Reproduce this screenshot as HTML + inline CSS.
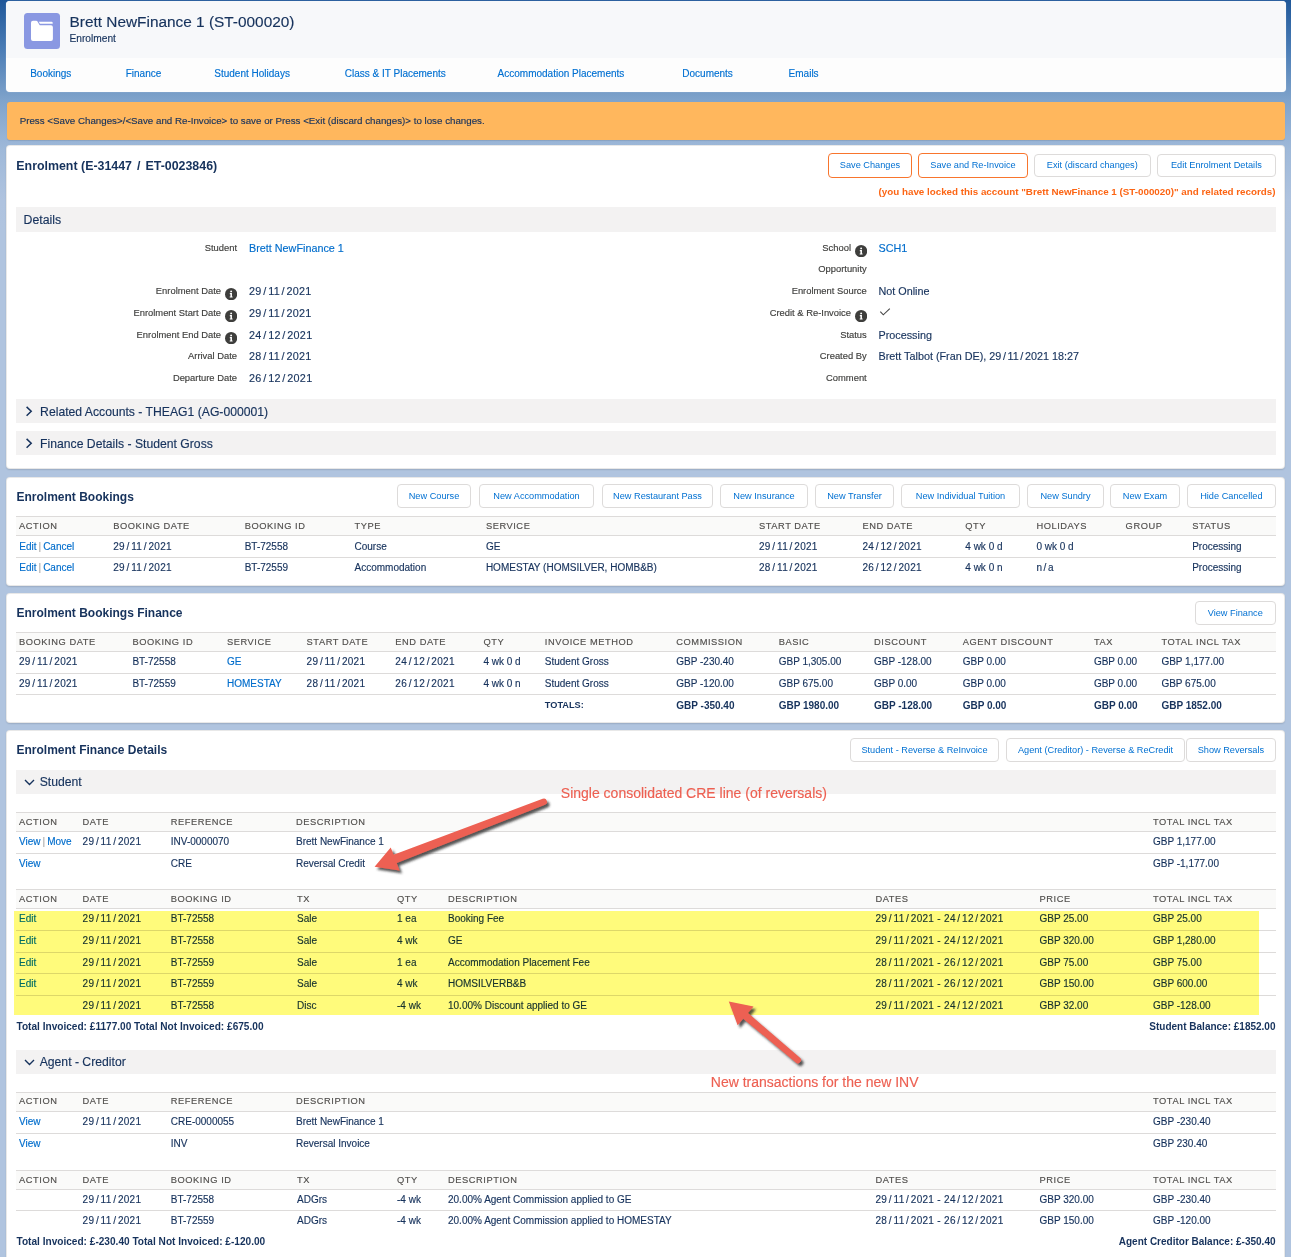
<!DOCTYPE html><html><head><meta charset="utf-8"><style>
html,body{margin:0;padding:0;}
body{width:1291px;height:1257px;position:relative;overflow:hidden;font-family:"Liberation Sans",sans-serif;background:#b0c4df;}
#bg{position:absolute;left:0;top:0;width:1291px;height:260px;background:linear-gradient(to bottom,#1f5799 0px,#4b7db6 50px,#7fa3cb 100px,#9fb9d9 150px,#afc3df 200px,#b0c4df 230px);}
.t{position:absolute;line-height:1;white-space:nowrap;-webkit-text-stroke:0.15px currentColor;}
.btn{position:absolute;box-sizing:border-box;background:#fff;border-radius:4px;color:#0070d2;text-align:center;white-space:nowrap;}
.info{position:absolute;line-height:0}
</style></head><body><div id="bg"></div>
<div style="position:absolute;left:6px;top:1px;width:1280px;height:90.5px;background:#fdfdfd;border-radius:4px;box-shadow:0 0 1px rgba(255,255,255,.6);overflow:hidden"></div>
<div style="position:absolute;left:6px;top:1px;width:1280px;height:57px;background:#f7f8fa;border-radius:4px 4px 0 0;"></div>
<div style="position:absolute;left:24px;top:13px;width:36px;height:36px;border-radius:3.5px;background:#8a98e2"><svg width="36" height="36" viewBox="0 0 36 36"><path d="M7 9.7 Q7 7.7 9 7.7 L12.3 7.7 Q13 7.7 13.35 8.3 L15.4 11.7 Q15.7 12.25 16.3 12.25 L27 12.25 Q28.9 12.25 28.9 14.2 L28.9 26 Q28.9 28 27 28 L9 28 Q7 28 7 26 Z" fill="#fff"/><path d="M14.7 8.75 L27.6 8.75 Q28.7 8.75 28.7 9.9 L28.7 10.85 L15.95 10.85 Z" fill="#fff"/></svg></div>
<div class="t" style="top:14.01px;font-size:15.4px;color:#16325c;left:69.5px;">Brett NewFinance 1 (ST-000020)</div>
<div class="t" style="top:34.42px;font-size:10.2px;color:#16325c;left:69.5px;">Enrolment</div>
<div class="t" style="top:68.58px;font-size:10px;color:#0070d2;left:30.2px;">Bookings</div>
<div class="t" style="top:68.58px;font-size:10px;color:#0070d2;left:125.7px;">Finance</div>
<div class="t" style="top:68.58px;font-size:10px;color:#0070d2;left:214.3px;">Student Holidays</div>
<div class="t" style="top:68.58px;font-size:10px;color:#0070d2;left:344.8px;">Class &amp; IT Placements</div>
<div class="t" style="top:68.58px;font-size:10px;color:#0070d2;left:497.6px;">Accommodation Placements</div>
<div class="t" style="top:68.58px;font-size:10px;color:#0070d2;left:682.3px;">Documents</div>
<div class="t" style="top:68.58px;font-size:10px;color:#0070d2;left:788.6px;">Emails</div>
<div style="position:absolute;left:7px;top:102px;width:1278px;height:38px;background:#ffb75d;border-radius:3px;box-shadow:0 1px 1px rgba(0,0,0,.1);"></div>
<div class="t" style="top:115.80px;font-size:9.75px;color:#16325c;left:19.7px;">Press &lt;Save Changes&gt;/&lt;Save and Re-Invoice&gt; to save or Press &lt;Exit (discard changes)&gt; to lose changes.</div>
<div style="position:absolute;left:6px;top:145px;width:1279px;height:324px;background:#fff;border-radius:4px;box-sizing:border-box;border:1px solid rgba(0,0,0,.09);box-shadow:0 1px 1.5px rgba(0,0,0,.12);"></div>
<div class="t" style="top:159.55px;font-size:12.4px;color:#16325c;font-weight:700;-webkit-text-stroke:0;left:16.3px;">Enrolment (E-31447 <span style="padding:0 1.6px">/</span> ET-0023846)</div>
<div class="btn" style="left:828px;top:152.5px;width:84px;height:25.5px;border:1.6px solid #f8752d;font-size:9.2px;line-height:22.3px">Save Changes</div>
<div class="btn" style="left:918px;top:152.5px;width:110px;height:25.5px;border:1.6px solid #f8752d;font-size:9.2px;line-height:22.3px">Save and Re-Invoice</div>
<div class="btn" style="left:1034px;top:153.5px;width:116.5px;height:23.0px;border:1px solid #dddbda;font-size:9.2px;line-height:21.0px">Exit (discard changes)</div>
<div class="btn" style="left:1157px;top:153.5px;width:118.70000000000005px;height:23.0px;border:1px solid #dddbda;font-size:9.2px;line-height:21.0px">Edit Enrolment Details</div>
<div class="t" style="top:186.75px;font-size:9.8px;color:#fc6514;font-weight:700;-webkit-text-stroke:0;right:15.5px;">(you have locked this account "Brett NewFinance 1 (ST-000020)" and related records)</div>
<div style="position:absolute;left:16px;top:207px;width:1260px;height:25px;background:#f3f2f2;"></div>
<div class="t" style="top:213.64px;font-size:12.3px;color:#16325c;left:23.5px;">Details</div>
<div class="t" style="top:243.09px;font-size:9.4px;color:#3e3e3c;right:1054px;">Student</div>
<div class="t" style="top:242.91px;font-size:10.8px;color:#006dcc;left:249px;">Brett NewFinance 1</div>
<div class="t" style="top:286.09px;font-size:9.4px;color:#3e3e3c;right:1070px;">Enrolment Date</div>
<div class="info" style="left:224.8px;top:288.0px;width:12.3px;height:12.3px;"><svg width="12.3" height="12.3" viewBox="0 0 12 12"><circle cx="6" cy="6" r="6" fill="#3e3e3c"/><circle cx="6" cy="3.3" r="0.95" fill="#fff"/><path d="M4.7 5 L6.8 5 L6.8 8.3 L7.4 8.3 L7.4 9.3 L4.6 9.3 L4.6 8.3 L5.3 8.3 L5.3 6 L4.7 6 Z" fill="#fff"/></svg></div>
<div class="t" style="top:285.91px;font-size:10.8px;color:#16325c;letter-spacing:0.3px;left:249px;">29<span style="padding:0 1.6px">/</span>11<span style="padding:0 1.6px">/</span>2021</div>
<div class="t" style="top:308.09px;font-size:9.4px;color:#3e3e3c;right:1070px;">Enrolment Start Date</div>
<div class="info" style="left:224.8px;top:310.0px;width:12.3px;height:12.3px;"><svg width="12.3" height="12.3" viewBox="0 0 12 12"><circle cx="6" cy="6" r="6" fill="#3e3e3c"/><circle cx="6" cy="3.3" r="0.95" fill="#fff"/><path d="M4.7 5 L6.8 5 L6.8 8.3 L7.4 8.3 L7.4 9.3 L4.6 9.3 L4.6 8.3 L5.3 8.3 L5.3 6 L4.7 6 Z" fill="#fff"/></svg></div>
<div class="t" style="top:307.91px;font-size:10.8px;color:#16325c;letter-spacing:0.3px;left:249px;">29<span style="padding:0 1.6px">/</span>11<span style="padding:0 1.6px">/</span>2021</div>
<div class="t" style="top:330.09px;font-size:9.4px;color:#3e3e3c;right:1070px;">Enrolment End Date</div>
<div class="info" style="left:224.8px;top:332.0px;width:12.3px;height:12.3px;"><svg width="12.3" height="12.3" viewBox="0 0 12 12"><circle cx="6" cy="6" r="6" fill="#3e3e3c"/><circle cx="6" cy="3.3" r="0.95" fill="#fff"/><path d="M4.7 5 L6.8 5 L6.8 8.3 L7.4 8.3 L7.4 9.3 L4.6 9.3 L4.6 8.3 L5.3 8.3 L5.3 6 L4.7 6 Z" fill="#fff"/></svg></div>
<div class="t" style="top:329.91px;font-size:10.8px;color:#16325c;letter-spacing:0.3px;left:249px;">24<span style="padding:0 1.6px">/</span>12<span style="padding:0 1.6px">/</span>2021</div>
<div class="t" style="top:351.09px;font-size:9.4px;color:#3e3e3c;right:1054px;">Arrival Date</div>
<div class="t" style="top:350.91px;font-size:10.8px;color:#16325c;letter-spacing:0.3px;left:249px;">28<span style="padding:0 1.6px">/</span>11<span style="padding:0 1.6px">/</span>2021</div>
<div class="t" style="top:373.09px;font-size:9.4px;color:#3e3e3c;right:1054px;">Departure Date</div>
<div class="t" style="top:372.91px;font-size:10.8px;color:#16325c;letter-spacing:0.3px;left:249px;">26<span style="padding:0 1.6px">/</span>12<span style="padding:0 1.6px">/</span>2021</div>
<div class="t" style="top:243.09px;font-size:9.4px;color:#3e3e3c;right:440px;">School</div>
<div class="info" style="left:854.5px;top:244.9px;width:12.3px;height:12.3px;"><svg width="12.3" height="12.3" viewBox="0 0 12 12"><circle cx="6" cy="6" r="6" fill="#3e3e3c"/><circle cx="6" cy="3.3" r="0.95" fill="#fff"/><path d="M4.7 5 L6.8 5 L6.8 8.3 L7.4 8.3 L7.4 9.3 L4.6 9.3 L4.6 8.3 L5.3 8.3 L5.3 6 L4.7 6 Z" fill="#fff"/></svg></div>
<div class="t" style="top:242.91px;font-size:10.8px;color:#006dcc;left:878.5px;">SCH1</div>
<div class="t" style="top:264.09px;font-size:9.4px;color:#3e3e3c;right:424.29999999999995px;">Opportunity</div>
<div class="t" style="top:286.09px;font-size:9.4px;color:#3e3e3c;right:424.29999999999995px;">Enrolment Source</div>
<div class="t" style="top:285.91px;font-size:10.8px;color:#16325c;left:878.5px;">Not Online</div>
<div class="t" style="top:308.09px;font-size:9.4px;color:#3e3e3c;right:440px;">Credit &amp; Re-Invoice</div>
<div class="info" style="left:854.5px;top:310.0px;width:12.3px;height:12.3px;"><svg width="12.3" height="12.3" viewBox="0 0 12 12"><circle cx="6" cy="6" r="6" fill="#3e3e3c"/><circle cx="6" cy="3.3" r="0.95" fill="#fff"/><path d="M4.7 5 L6.8 5 L6.8 8.3 L7.4 8.3 L7.4 9.3 L4.6 9.3 L4.6 8.3 L5.3 8.3 L5.3 6 L4.7 6 Z" fill="#fff"/></svg></div>
<svg style="position:absolute;left:878.5px;top:307.5px" width="12" height="9" viewBox="0 0 12 9"><path d="M1.3 3.6 L4.3 6.8 L10.8 0.6" fill="none" stroke="#4a4a4a" stroke-width="1.15"/></svg>
<div class="t" style="top:330.09px;font-size:9.4px;color:#3e3e3c;right:424.29999999999995px;">Status</div>
<div class="t" style="top:329.91px;font-size:10.8px;color:#16325c;left:878.5px;">Processing</div>
<div class="t" style="top:351.09px;font-size:9.4px;color:#3e3e3c;right:424.29999999999995px;">Created By</div>
<div class="t" style="top:350.91px;font-size:10.8px;color:#16325c;left:878.5px;">Brett Talbot (Fran DE), 29<span style="padding:0 1.6px">/</span>11<span style="padding:0 1.6px">/</span>2021 18:27</div>
<div class="t" style="top:373.09px;font-size:9.4px;color:#3e3e3c;right:424.29999999999995px;">Comment</div>
<div style="position:absolute;left:16px;top:399px;width:1260px;height:23.5px;background:#f3f2f2;"></div>
<svg style="position:absolute;left:25px;top:405.5px" width="8" height="11" viewBox="0 0 8 11"><path d="M1.6 0.9 L6.2 5.3 L1.6 9.7" fill="none" stroke="#16325c" stroke-width="1.5"/></svg>
<div class="t" style="top:405.72px;font-size:12.2px;color:#16325c;left:40.1px;">Related Accounts - THEAG1 (AG-000001)</div>
<div style="position:absolute;left:16px;top:431px;width:1260px;height:23.5px;background:#f3f2f2;"></div>
<svg style="position:absolute;left:25px;top:437.5px" width="8" height="11" viewBox="0 0 8 11"><path d="M1.6 0.9 L6.2 5.3 L1.6 9.7" fill="none" stroke="#16325c" stroke-width="1.5"/></svg>
<div class="t" style="top:437.72px;font-size:12.2px;color:#16325c;left:40.1px;">Finance Details - Student Gross</div>
<div style="position:absolute;left:6px;top:477px;width:1279px;height:108.5px;background:#fff;border-radius:4px;box-sizing:border-box;border:1px solid rgba(0,0,0,.09);box-shadow:0 1px 1.5px rgba(0,0,0,.12);"></div>
<div class="t" style="top:490.89px;font-size:12px;color:#16325c;font-weight:700;-webkit-text-stroke:0;left:16.5px;">Enrolment Bookings</div>
<div class="btn" style="left:397px;top:484px;width:74px;height:24px;border:1px solid #dddbda;font-size:9.2px;line-height:22px">New Course</div>
<div class="btn" style="left:479px;top:484px;width:115px;height:24px;border:1px solid #dddbda;font-size:9.2px;line-height:22px">New Accommodation</div>
<div class="btn" style="left:602px;top:484px;width:111px;height:24px;border:1px solid #dddbda;font-size:9.2px;line-height:22px">New Restaurant Pass</div>
<div class="btn" style="left:720px;top:484px;width:88px;height:24px;border:1px solid #dddbda;font-size:9.2px;line-height:22px">New Insurance</div>
<div class="btn" style="left:815px;top:484px;width:79px;height:24px;border:1px solid #dddbda;font-size:9.2px;line-height:22px">New Transfer</div>
<div class="btn" style="left:901px;top:484px;width:119px;height:24px;border:1px solid #dddbda;font-size:9.2px;line-height:22px">New Individual Tuition</div>
<div class="btn" style="left:1027px;top:484px;width:77px;height:24px;border:1px solid #dddbda;font-size:9.2px;line-height:22px">New Sundry</div>
<div class="btn" style="left:1110px;top:484px;width:70px;height:24px;border:1px solid #dddbda;font-size:9.2px;line-height:22px">New Exam</div>
<div class="btn" style="left:1187px;top:484px;width:88.70000000000005px;height:24px;border:1px solid #dddbda;font-size:9.2px;line-height:22px">Hide Cancelled</div>
<div style="position:absolute;left:16px;top:516px;width:1260px;height:19px;background:#fafaf9;"></div>
<div style="position:absolute;left:16px;top:516px;width:1260px;height:1px;background:#dddbda;"></div>
<div style="position:absolute;left:16px;top:535px;width:1260px;height:1px;background:#dddbda;"></div>
<div class="t" style="top:522.18px;font-size:9.3px;color:#514f4d;letter-spacing:0.55px;left:19.1px;">ACTION</div>
<div class="t" style="top:522.18px;font-size:9.3px;color:#514f4d;letter-spacing:0.55px;left:113.2px;">BOOKING DATE</div>
<div class="t" style="top:522.18px;font-size:9.3px;color:#514f4d;letter-spacing:0.55px;left:244.7px;">BOOKING ID</div>
<div class="t" style="top:522.18px;font-size:9.3px;color:#514f4d;letter-spacing:0.55px;left:354.5px;">TYPE</div>
<div class="t" style="top:522.18px;font-size:9.3px;color:#514f4d;letter-spacing:0.55px;left:485.9px;">SERVICE</div>
<div class="t" style="top:522.18px;font-size:9.3px;color:#514f4d;letter-spacing:0.55px;left:759px;">START DATE</div>
<div class="t" style="top:522.18px;font-size:9.3px;color:#514f4d;letter-spacing:0.55px;left:862.4px;">END DATE</div>
<div class="t" style="top:522.18px;font-size:9.3px;color:#514f4d;letter-spacing:0.55px;left:965.3px;">QTY</div>
<div class="t" style="top:522.18px;font-size:9.3px;color:#514f4d;letter-spacing:0.55px;left:1036.4px;">HOLIDAYS</div>
<div class="t" style="top:522.18px;font-size:9.3px;color:#514f4d;letter-spacing:0.55px;left:1125.6px;">GROUP</div>
<div class="t" style="top:522.18px;font-size:9.3px;color:#514f4d;letter-spacing:0.55px;left:1192.2px;">STATUS</div>
<div class="t" style="top:541.58px;font-size:10px;color:#006dcc;left:19.3px;">Edit<span style="color:#aaa;padding:0 2px">|</span>Cancel</div>
<div class="t" style="top:541.58px;font-size:10px;color:#16325c;letter-spacing:0.3px;left:113.2px;">29<span style="padding:0 1.6px">/</span>11<span style="padding:0 1.6px">/</span>2021</div>
<div class="t" style="top:541.58px;font-size:10px;color:#16325c;left:244.7px;">BT-72558</div>
<div class="t" style="top:541.58px;font-size:10px;color:#16325c;left:354.5px;">Course</div>
<div class="t" style="top:541.58px;font-size:10px;color:#16325c;left:485.9px;">GE</div>
<div class="t" style="top:541.58px;font-size:10px;color:#16325c;letter-spacing:0.3px;left:759px;">29<span style="padding:0 1.6px">/</span>11<span style="padding:0 1.6px">/</span>2021</div>
<div class="t" style="top:541.58px;font-size:10px;color:#16325c;letter-spacing:0.3px;left:862.4px;">24<span style="padding:0 1.6px">/</span>12<span style="padding:0 1.6px">/</span>2021</div>
<div class="t" style="top:541.58px;font-size:10px;color:#16325c;left:965.3px;">4 wk 0 d</div>
<div class="t" style="top:541.58px;font-size:10px;color:#16325c;left:1036.4px;">0 wk 0 d</div>
<div class="t" style="top:541.58px;font-size:10px;color:#16325c;left:1192.2px;">Processing</div>
<div style="position:absolute;left:16px;top:557px;width:1260px;height:1px;background:#dddbda;"></div>
<div class="t" style="top:562.58px;font-size:10px;color:#006dcc;left:19.3px;">Edit<span style="color:#aaa;padding:0 2px">|</span>Cancel</div>
<div class="t" style="top:562.58px;font-size:10px;color:#16325c;letter-spacing:0.3px;left:113.2px;">29<span style="padding:0 1.6px">/</span>11<span style="padding:0 1.6px">/</span>2021</div>
<div class="t" style="top:562.58px;font-size:10px;color:#16325c;left:244.7px;">BT-72559</div>
<div class="t" style="top:562.58px;font-size:10px;color:#16325c;left:354.5px;">Accommodation</div>
<div class="t" style="top:562.58px;font-size:10px;color:#16325c;left:485.9px;">HOMESTAY (HOMSILVER, HOMB&amp;B)</div>
<div class="t" style="top:562.58px;font-size:10px;color:#16325c;letter-spacing:0.3px;left:759px;">28<span style="padding:0 1.6px">/</span>11<span style="padding:0 1.6px">/</span>2021</div>
<div class="t" style="top:562.58px;font-size:10px;color:#16325c;letter-spacing:0.3px;left:862.4px;">26<span style="padding:0 1.6px">/</span>12<span style="padding:0 1.6px">/</span>2021</div>
<div class="t" style="top:562.58px;font-size:10px;color:#16325c;left:965.3px;">4 wk 0 n</div>
<div class="t" style="top:562.58px;font-size:10px;color:#16325c;left:1036.4px;">n<span style="padding:0 1.6px">/</span>a</div>
<div class="t" style="top:562.58px;font-size:10px;color:#16325c;left:1192.2px;">Processing</div>
<div style="position:absolute;left:6px;top:592.5px;width:1279px;height:130.5px;background:#fff;border-radius:4px;box-sizing:border-box;border:1px solid rgba(0,0,0,.09);box-shadow:0 1px 1.5px rgba(0,0,0,.12);"></div>
<div class="t" style="top:606.89px;font-size:12px;color:#16325c;font-weight:700;-webkit-text-stroke:0;left:16.5px;">Enrolment Bookings Finance</div>
<div class="btn" style="left:1195px;top:600.5px;width:80.5px;height:24.0px;border:1px solid #dddbda;font-size:9.2px;line-height:22.0px">View Finance</div>
<div style="position:absolute;left:16px;top:632px;width:1260px;height:19px;background:#fafaf9;"></div>
<div style="position:absolute;left:16px;top:632px;width:1260px;height:1px;background:#dddbda;"></div>
<div style="position:absolute;left:16px;top:651px;width:1260px;height:1px;background:#dddbda;"></div>
<div class="t" style="top:638.18px;font-size:9.3px;color:#514f4d;letter-spacing:0.55px;left:19px;">BOOKING DATE</div>
<div class="t" style="top:638.18px;font-size:9.3px;color:#514f4d;letter-spacing:0.55px;left:132.4px;">BOOKING ID</div>
<div class="t" style="top:638.18px;font-size:9.3px;color:#514f4d;letter-spacing:0.55px;left:227px;">SERVICE</div>
<div class="t" style="top:638.18px;font-size:9.3px;color:#514f4d;letter-spacing:0.55px;left:306.6px;">START DATE</div>
<div class="t" style="top:638.18px;font-size:9.3px;color:#514f4d;letter-spacing:0.55px;left:395.3px;">END DATE</div>
<div class="t" style="top:638.18px;font-size:9.3px;color:#514f4d;letter-spacing:0.55px;left:483.4px;">QTY</div>
<div class="t" style="top:638.18px;font-size:9.3px;color:#514f4d;letter-spacing:0.55px;left:544.8px;">INVOICE METHOD</div>
<div class="t" style="top:638.18px;font-size:9.3px;color:#514f4d;letter-spacing:0.55px;left:676.3px;">COMMISSION</div>
<div class="t" style="top:638.18px;font-size:9.3px;color:#514f4d;letter-spacing:0.55px;left:778.7px;">BASIC</div>
<div class="t" style="top:638.18px;font-size:9.3px;color:#514f4d;letter-spacing:0.55px;left:874px;">DISCOUNT</div>
<div class="t" style="top:638.18px;font-size:9.3px;color:#514f4d;letter-spacing:0.55px;left:962.7px;">AGENT DISCOUNT</div>
<div class="t" style="top:638.18px;font-size:9.3px;color:#514f4d;letter-spacing:0.55px;left:1093.9px;">TAX</div>
<div class="t" style="top:638.18px;font-size:9.3px;color:#514f4d;letter-spacing:0.55px;left:1161.4px;">TOTAL INCL TAX</div>
<div class="t" style="top:656.58px;font-size:10px;color:#16325c;letter-spacing:0.3px;left:19px;">29<span style="padding:0 1.6px">/</span>11<span style="padding:0 1.6px">/</span>2021</div>
<div class="t" style="top:656.58px;font-size:10px;color:#16325c;left:132.4px;">BT-72558</div>
<div class="t" style="top:656.58px;font-size:10px;color:#006dcc;left:227px;">GE</div>
<div class="t" style="top:656.58px;font-size:10px;color:#16325c;letter-spacing:0.3px;left:306.6px;">29<span style="padding:0 1.6px">/</span>11<span style="padding:0 1.6px">/</span>2021</div>
<div class="t" style="top:656.58px;font-size:10px;color:#16325c;letter-spacing:0.3px;left:395.3px;">24<span style="padding:0 1.6px">/</span>12<span style="padding:0 1.6px">/</span>2021</div>
<div class="t" style="top:656.58px;font-size:10px;color:#16325c;left:483.4px;">4 wk 0 d</div>
<div class="t" style="top:656.58px;font-size:10px;color:#16325c;left:544.8px;">Student Gross</div>
<div class="t" style="top:656.58px;font-size:10px;color:#16325c;left:676.3px;">GBP -230.40</div>
<div class="t" style="top:656.58px;font-size:10px;color:#16325c;left:778.7px;">GBP 1,305.00</div>
<div class="t" style="top:656.58px;font-size:10px;color:#16325c;left:874px;">GBP -128.00</div>
<div class="t" style="top:656.58px;font-size:10px;color:#16325c;left:962.7px;">GBP 0.00</div>
<div class="t" style="top:656.58px;font-size:10px;color:#16325c;left:1093.9px;">GBP 0.00</div>
<div class="t" style="top:656.58px;font-size:10px;color:#16325c;left:1161.4px;">GBP 1,177.00</div>
<div style="position:absolute;left:16px;top:673px;width:1260px;height:1px;background:#dddbda;"></div>
<div class="t" style="top:678.58px;font-size:10px;color:#16325c;letter-spacing:0.3px;left:19px;">29<span style="padding:0 1.6px">/</span>11<span style="padding:0 1.6px">/</span>2021</div>
<div class="t" style="top:678.58px;font-size:10px;color:#16325c;left:132.4px;">BT-72559</div>
<div class="t" style="top:678.58px;font-size:10px;color:#006dcc;left:227px;">HOMESTAY</div>
<div class="t" style="top:678.58px;font-size:10px;color:#16325c;letter-spacing:0.3px;left:306.6px;">28<span style="padding:0 1.6px">/</span>11<span style="padding:0 1.6px">/</span>2021</div>
<div class="t" style="top:678.58px;font-size:10px;color:#16325c;letter-spacing:0.3px;left:395.3px;">26<span style="padding:0 1.6px">/</span>12<span style="padding:0 1.6px">/</span>2021</div>
<div class="t" style="top:678.58px;font-size:10px;color:#16325c;left:483.4px;">4 wk 0 n</div>
<div class="t" style="top:678.58px;font-size:10px;color:#16325c;left:544.8px;">Student Gross</div>
<div class="t" style="top:678.58px;font-size:10px;color:#16325c;left:676.3px;">GBP -120.00</div>
<div class="t" style="top:678.58px;font-size:10px;color:#16325c;left:778.7px;">GBP 675.00</div>
<div class="t" style="top:678.58px;font-size:10px;color:#16325c;left:874px;">GBP 0.00</div>
<div class="t" style="top:678.58px;font-size:10px;color:#16325c;left:962.7px;">GBP 0.00</div>
<div class="t" style="top:678.58px;font-size:10px;color:#16325c;left:1093.9px;">GBP 0.00</div>
<div class="t" style="top:678.58px;font-size:10px;color:#16325c;left:1161.4px;">GBP 675.00</div>
<div style="position:absolute;left:16px;top:694px;width:1260px;height:1px;background:#dddbda;"></div>
<div class="t" style="top:701.26px;font-size:9.2px;color:#16325c;font-weight:700;-webkit-text-stroke:0;left:544.8px;">TOTALS:</div>
<div class="t" style="top:700.58px;font-size:10px;color:#16325c;font-weight:700;-webkit-text-stroke:0;left:676.3px;">GBP -350.40</div>
<div class="t" style="top:700.58px;font-size:10px;color:#16325c;font-weight:700;-webkit-text-stroke:0;left:778.7px;">GBP 1980.00</div>
<div class="t" style="top:700.58px;font-size:10px;color:#16325c;font-weight:700;-webkit-text-stroke:0;left:874px;">GBP -128.00</div>
<div class="t" style="top:700.58px;font-size:10px;color:#16325c;font-weight:700;-webkit-text-stroke:0;left:962.7px;">GBP 0.00</div>
<div class="t" style="top:700.58px;font-size:10px;color:#16325c;font-weight:700;-webkit-text-stroke:0;left:1093.9px;">GBP 0.00</div>
<div class="t" style="top:700.58px;font-size:10px;color:#16325c;font-weight:700;-webkit-text-stroke:0;left:1161.4px;">GBP 1852.00</div>
<div style="position:absolute;left:6px;top:729.5px;width:1279px;height:540px;box-sizing:border-box;background:#fff;border-radius:4px;border:1px solid rgba(0,0,0,.09);box-shadow:0 1px 1.5px rgba(0,0,0,.12)"></div>
<div class="t" style="top:743.89px;font-size:12px;color:#16325c;font-weight:700;-webkit-text-stroke:0;left:16.5px;">Enrolment Finance Details</div>
<div class="btn" style="left:850px;top:737.5px;width:149px;height:24.0px;border:1px solid #dddbda;font-size:9.2px;line-height:22.0px">Student - Reverse &amp; ReInvoice</div>
<div class="btn" style="left:1006px;top:737.5px;width:179px;height:24.0px;border:1px solid #dddbda;font-size:9.2px;line-height:22.0px">Agent (Creditor) - Reverse &amp; ReCredit</div>
<div class="btn" style="left:1186px;top:737.5px;width:89.70000000000005px;height:24.0px;border:1px solid #dddbda;font-size:9.2px;line-height:22.0px">Show Reversals</div>
<div style="position:absolute;left:16px;top:770px;width:1260px;height:24px;background:#f3f2f2;"></div>
<svg style="position:absolute;left:23.6px;top:779px" width="11" height="7" viewBox="0 0 11 7"><path d="M1 1 L5.5 5.5 L10 1" fill="none" stroke="#16325c" stroke-width="1.4"/></svg>
<div class="t" style="top:775.72px;font-size:12.2px;color:#16325c;left:39.7px;">Student</div>
<div style="position:absolute;left:16px;top:812px;width:1260px;height:19px;background:#fafaf9;"></div>
<div style="position:absolute;left:16px;top:812px;width:1260px;height:1px;background:#dddbda;"></div>
<div style="position:absolute;left:16px;top:831px;width:1260px;height:1px;background:#dddbda;"></div>
<div class="t" style="top:818.18px;font-size:9.3px;color:#514f4d;letter-spacing:0.55px;left:19.1px;">ACTION</div>
<div class="t" style="top:818.18px;font-size:9.3px;color:#514f4d;letter-spacing:0.55px;left:82.6px;">DATE</div>
<div class="t" style="top:818.18px;font-size:9.3px;color:#514f4d;letter-spacing:0.55px;left:170.8px;">REFERENCE</div>
<div class="t" style="top:818.18px;font-size:9.3px;color:#514f4d;letter-spacing:0.55px;left:296px;">DESCRIPTION</div>
<div class="t" style="top:818.18px;font-size:9.3px;color:#514f4d;letter-spacing:0.55px;left:1153px;">TOTAL INCL TAX</div>
<div class="t" style="top:836.58px;font-size:10px;color:#006dcc;left:19.1px;">View<span style="color:#aaa;padding:0 2px">|</span>Move</div>
<div class="t" style="top:836.58px;font-size:10px;color:#16325c;letter-spacing:0.3px;left:82.6px;">29<span style="padding:0 1.6px">/</span>11<span style="padding:0 1.6px">/</span>2021</div>
<div class="t" style="top:836.58px;font-size:10px;color:#16325c;left:170.8px;">INV-0000070</div>
<div class="t" style="top:836.58px;font-size:10px;color:#16325c;left:296px;">Brett NewFinance 1</div>
<div class="t" style="top:836.58px;font-size:10px;color:#16325c;left:1153px;">GBP 1,177.00</div>
<div style="position:absolute;left:16px;top:853px;width:1260px;height:1px;background:#dddbda;"></div>
<div class="t" style="top:858.58px;font-size:10px;color:#006dcc;left:19.1px;">View</div>
<div class="t" style="top:858.58px;font-size:10px;color:#16325c;left:170.8px;">CRE</div>
<div class="t" style="top:858.58px;font-size:10px;color:#16325c;left:296px;">Reversal Credit</div>
<div class="t" style="top:858.58px;font-size:10px;color:#16325c;left:1153px;">GBP -1,177.00</div>
<div style="position:absolute;left:16px;top:889px;width:1260px;height:19px;background:#fafaf9;"></div>
<div style="position:absolute;left:16px;top:889px;width:1260px;height:1px;background:#dddbda;"></div>
<div style="position:absolute;left:16px;top:908px;width:1260px;height:1px;background:#dddbda;"></div>
<div class="t" style="top:895.18px;font-size:9.3px;color:#514f4d;letter-spacing:0.55px;left:19.1px;">ACTION</div>
<div class="t" style="top:895.18px;font-size:9.3px;color:#514f4d;letter-spacing:0.55px;left:82.6px;">DATE</div>
<div class="t" style="top:895.18px;font-size:9.3px;color:#514f4d;letter-spacing:0.55px;left:170.8px;">BOOKING ID</div>
<div class="t" style="top:895.18px;font-size:9.3px;color:#514f4d;letter-spacing:0.55px;left:297px;">TX</div>
<div class="t" style="top:895.18px;font-size:9.3px;color:#514f4d;letter-spacing:0.55px;left:397px;">QTY</div>
<div class="t" style="top:895.18px;font-size:9.3px;color:#514f4d;letter-spacing:0.55px;left:448px;">DESCRIPTION</div>
<div class="t" style="top:895.18px;font-size:9.3px;color:#514f4d;letter-spacing:0.55px;left:875.5px;">DATES</div>
<div class="t" style="top:895.18px;font-size:9.3px;color:#514f4d;letter-spacing:0.55px;left:1039.5px;">PRICE</div>
<div class="t" style="top:895.18px;font-size:9.3px;color:#514f4d;letter-spacing:0.55px;left:1153px;">TOTAL INCL TAX</div>
<div class="t" style="top:913.58px;font-size:10px;color:#006dcc;left:19.1px;">Edit</div>
<div class="t" style="top:913.58px;font-size:10px;color:#16325c;letter-spacing:0.3px;left:82.6px;">29<span style="padding:0 1.6px">/</span>11<span style="padding:0 1.6px">/</span>2021</div>
<div class="t" style="top:913.58px;font-size:10px;color:#16325c;left:170.8px;">BT-72558</div>
<div class="t" style="top:913.58px;font-size:10px;color:#16325c;left:297px;">Sale</div>
<div class="t" style="top:913.58px;font-size:10px;color:#16325c;left:397px;">1 ea</div>
<div class="t" style="top:913.58px;font-size:10px;color:#16325c;left:448px;">Booking Fee</div>
<div class="t" style="top:913.58px;font-size:10px;color:#16325c;letter-spacing:0.3px;left:875.5px;">29<span style="padding:0 1.6px">/</span>11<span style="padding:0 1.6px">/</span>2021 - 24<span style="padding:0 1.6px">/</span>12<span style="padding:0 1.6px">/</span>2021</div>
<div class="t" style="top:913.58px;font-size:10px;color:#16325c;left:1039.5px;">GBP 25.00</div>
<div class="t" style="top:913.58px;font-size:10px;color:#16325c;left:1153px;">GBP 25.00</div>
<div style="position:absolute;left:16px;top:930px;width:1260px;height:1px;background:#dddbda;"></div>
<div class="t" style="top:935.58px;font-size:10px;color:#006dcc;left:19.1px;">Edit</div>
<div class="t" style="top:935.58px;font-size:10px;color:#16325c;letter-spacing:0.3px;left:82.6px;">29<span style="padding:0 1.6px">/</span>11<span style="padding:0 1.6px">/</span>2021</div>
<div class="t" style="top:935.58px;font-size:10px;color:#16325c;left:170.8px;">BT-72558</div>
<div class="t" style="top:935.58px;font-size:10px;color:#16325c;left:297px;">Sale</div>
<div class="t" style="top:935.58px;font-size:10px;color:#16325c;left:397px;">4 wk</div>
<div class="t" style="top:935.58px;font-size:10px;color:#16325c;left:448px;">GE</div>
<div class="t" style="top:935.58px;font-size:10px;color:#16325c;letter-spacing:0.3px;left:875.5px;">29<span style="padding:0 1.6px">/</span>11<span style="padding:0 1.6px">/</span>2021 - 24<span style="padding:0 1.6px">/</span>12<span style="padding:0 1.6px">/</span>2021</div>
<div class="t" style="top:935.58px;font-size:10px;color:#16325c;left:1039.5px;">GBP 320.00</div>
<div class="t" style="top:935.58px;font-size:10px;color:#16325c;left:1153px;">GBP 1,280.00</div>
<div style="position:absolute;left:16px;top:952px;width:1260px;height:1px;background:#dddbda;"></div>
<div class="t" style="top:957.58px;font-size:10px;color:#006dcc;left:19.1px;">Edit</div>
<div class="t" style="top:957.58px;font-size:10px;color:#16325c;letter-spacing:0.3px;left:82.6px;">29<span style="padding:0 1.6px">/</span>11<span style="padding:0 1.6px">/</span>2021</div>
<div class="t" style="top:957.58px;font-size:10px;color:#16325c;left:170.8px;">BT-72559</div>
<div class="t" style="top:957.58px;font-size:10px;color:#16325c;left:297px;">Sale</div>
<div class="t" style="top:957.58px;font-size:10px;color:#16325c;left:397px;">1 ea</div>
<div class="t" style="top:957.58px;font-size:10px;color:#16325c;left:448px;">Accommodation Placement Fee</div>
<div class="t" style="top:957.58px;font-size:10px;color:#16325c;letter-spacing:0.3px;left:875.5px;">28<span style="padding:0 1.6px">/</span>11<span style="padding:0 1.6px">/</span>2021 - 26<span style="padding:0 1.6px">/</span>12<span style="padding:0 1.6px">/</span>2021</div>
<div class="t" style="top:957.58px;font-size:10px;color:#16325c;left:1039.5px;">GBP 75.00</div>
<div class="t" style="top:957.58px;font-size:10px;color:#16325c;left:1153px;">GBP 75.00</div>
<div style="position:absolute;left:16px;top:973px;width:1260px;height:1px;background:#dddbda;"></div>
<div class="t" style="top:978.58px;font-size:10px;color:#006dcc;left:19.1px;">Edit</div>
<div class="t" style="top:978.58px;font-size:10px;color:#16325c;letter-spacing:0.3px;left:82.6px;">29<span style="padding:0 1.6px">/</span>11<span style="padding:0 1.6px">/</span>2021</div>
<div class="t" style="top:978.58px;font-size:10px;color:#16325c;left:170.8px;">BT-72559</div>
<div class="t" style="top:978.58px;font-size:10px;color:#16325c;left:297px;">Sale</div>
<div class="t" style="top:978.58px;font-size:10px;color:#16325c;left:397px;">4 wk</div>
<div class="t" style="top:978.58px;font-size:10px;color:#16325c;left:448px;">HOMSILVERB&amp;B</div>
<div class="t" style="top:978.58px;font-size:10px;color:#16325c;letter-spacing:0.3px;left:875.5px;">28<span style="padding:0 1.6px">/</span>11<span style="padding:0 1.6px">/</span>2021 - 26<span style="padding:0 1.6px">/</span>12<span style="padding:0 1.6px">/</span>2021</div>
<div class="t" style="top:978.58px;font-size:10px;color:#16325c;left:1039.5px;">GBP 150.00</div>
<div class="t" style="top:978.58px;font-size:10px;color:#16325c;left:1153px;">GBP 600.00</div>
<div style="position:absolute;left:16px;top:995.3px;width:1260px;height:1px;background:#dddbda;"></div>
<div class="t" style="top:1000.58px;font-size:10px;color:#16325c;letter-spacing:0.3px;left:82.6px;">29<span style="padding:0 1.6px">/</span>11<span style="padding:0 1.6px">/</span>2021</div>
<div class="t" style="top:1000.58px;font-size:10px;color:#16325c;left:170.8px;">BT-72558</div>
<div class="t" style="top:1000.58px;font-size:10px;color:#16325c;left:297px;">Disc</div>
<div class="t" style="top:1000.58px;font-size:10px;color:#16325c;left:397px;">-4 wk</div>
<div class="t" style="top:1000.58px;font-size:10px;color:#16325c;left:448px;">10.00% Discount applied to GE</div>
<div class="t" style="top:1000.58px;font-size:10px;color:#16325c;letter-spacing:0.3px;left:875.5px;">29<span style="padding:0 1.6px">/</span>11<span style="padding:0 1.6px">/</span>2021 - 24<span style="padding:0 1.6px">/</span>12<span style="padding:0 1.6px">/</span>2021</div>
<div class="t" style="top:1000.58px;font-size:10px;color:#16325c;left:1039.5px;">GBP 32.00</div>
<div class="t" style="top:1000.58px;font-size:10px;color:#16325c;left:1153px;">GBP -128.00</div>
<div style="position:absolute;left:13.5px;top:910.5px;width:1245.5px;height:104.5px;background:#fffb7b;mix-blend-mode:multiply;"></div>
<div class="t" style="top:1021.50px;font-size:10.1px;color:#16325c;font-weight:700;-webkit-text-stroke:0;left:16.5px;">Total Invoiced: £1177.00 Total Not Invoiced: £675.00</div>
<div class="t" style="top:1021.58px;font-size:10px;color:#16325c;font-weight:700;-webkit-text-stroke:0;right:15.5px;">Student Balance: £1852.00</div>
<div style="position:absolute;left:16px;top:1050px;width:1260px;height:24px;background:#f3f2f2;"></div>
<svg style="position:absolute;left:23.6px;top:1059px" width="11" height="7" viewBox="0 0 11 7"><path d="M1 1 L5.5 5.5 L10 1" fill="none" stroke="#16325c" stroke-width="1.4"/></svg>
<div class="t" style="top:1055.72px;font-size:12.2px;color:#16325c;left:39.7px;">Agent - Creditor</div>
<div style="position:absolute;left:16px;top:1092px;width:1260px;height:19px;background:#fafaf9;"></div>
<div style="position:absolute;left:16px;top:1092px;width:1260px;height:1px;background:#dddbda;"></div>
<div style="position:absolute;left:16px;top:1111px;width:1260px;height:1px;background:#dddbda;"></div>
<div class="t" style="top:1097.18px;font-size:9.3px;color:#514f4d;letter-spacing:0.55px;left:19.1px;">ACTION</div>
<div class="t" style="top:1097.18px;font-size:9.3px;color:#514f4d;letter-spacing:0.55px;left:82.6px;">DATE</div>
<div class="t" style="top:1097.18px;font-size:9.3px;color:#514f4d;letter-spacing:0.55px;left:170.8px;">REFERENCE</div>
<div class="t" style="top:1097.18px;font-size:9.3px;color:#514f4d;letter-spacing:0.55px;left:296px;">DESCRIPTION</div>
<div class="t" style="top:1097.18px;font-size:9.3px;color:#514f4d;letter-spacing:0.55px;left:1153px;">TOTAL INCL TAX</div>
<div class="t" style="top:1116.59px;font-size:10px;color:#006dcc;left:19.1px;">View</div>
<div class="t" style="top:1116.59px;font-size:10px;color:#16325c;letter-spacing:0.3px;left:82.6px;">29<span style="padding:0 1.6px">/</span>11<span style="padding:0 1.6px">/</span>2021</div>
<div class="t" style="top:1116.59px;font-size:10px;color:#16325c;left:170.8px;">CRE-0000055</div>
<div class="t" style="top:1116.59px;font-size:10px;color:#16325c;left:296px;">Brett NewFinance 1</div>
<div class="t" style="top:1116.59px;font-size:10px;color:#16325c;left:1153px;">GBP -230.40</div>
<div style="position:absolute;left:16px;top:1133px;width:1260px;height:1px;background:#dddbda;"></div>
<div class="t" style="top:1138.59px;font-size:10px;color:#006dcc;left:19.1px;">View</div>
<div class="t" style="top:1138.59px;font-size:10px;color:#16325c;left:170.8px;">INV</div>
<div class="t" style="top:1138.59px;font-size:10px;color:#16325c;left:296px;">Reversal Invoice</div>
<div class="t" style="top:1138.59px;font-size:10px;color:#16325c;left:1153px;">GBP 230.40</div>
<div style="position:absolute;left:16px;top:1170px;width:1260px;height:19px;background:#fafaf9;"></div>
<div style="position:absolute;left:16px;top:1170px;width:1260px;height:1px;background:#dddbda;"></div>
<div style="position:absolute;left:16px;top:1189px;width:1260px;height:1px;background:#dddbda;"></div>
<div class="t" style="top:1176.18px;font-size:9.3px;color:#514f4d;letter-spacing:0.55px;left:19.1px;">ACTION</div>
<div class="t" style="top:1176.18px;font-size:9.3px;color:#514f4d;letter-spacing:0.55px;left:82.6px;">DATE</div>
<div class="t" style="top:1176.18px;font-size:9.3px;color:#514f4d;letter-spacing:0.55px;left:170.8px;">BOOKING ID</div>
<div class="t" style="top:1176.18px;font-size:9.3px;color:#514f4d;letter-spacing:0.55px;left:297px;">TX</div>
<div class="t" style="top:1176.18px;font-size:9.3px;color:#514f4d;letter-spacing:0.55px;left:397px;">QTY</div>
<div class="t" style="top:1176.18px;font-size:9.3px;color:#514f4d;letter-spacing:0.55px;left:448px;">DESCRIPTION</div>
<div class="t" style="top:1176.18px;font-size:9.3px;color:#514f4d;letter-spacing:0.55px;left:875.5px;">DATES</div>
<div class="t" style="top:1176.18px;font-size:9.3px;color:#514f4d;letter-spacing:0.55px;left:1039.5px;">PRICE</div>
<div class="t" style="top:1176.18px;font-size:9.3px;color:#514f4d;letter-spacing:0.55px;left:1153px;">TOTAL INCL TAX</div>
<div class="t" style="top:1194.59px;font-size:10px;color:#16325c;letter-spacing:0.3px;left:82.6px;">29<span style="padding:0 1.6px">/</span>11<span style="padding:0 1.6px">/</span>2021</div>
<div class="t" style="top:1194.59px;font-size:10px;color:#16325c;left:170.8px;">BT-72558</div>
<div class="t" style="top:1194.59px;font-size:10px;color:#16325c;left:297px;">ADGrs</div>
<div class="t" style="top:1194.59px;font-size:10px;color:#16325c;left:397px;">-4 wk</div>
<div class="t" style="top:1194.59px;font-size:10px;color:#16325c;left:448px;">20.00% Agent Commission applied to GE</div>
<div class="t" style="top:1194.59px;font-size:10px;color:#16325c;letter-spacing:0.3px;left:875.5px;">29<span style="padding:0 1.6px">/</span>11<span style="padding:0 1.6px">/</span>2021 - 24<span style="padding:0 1.6px">/</span>12<span style="padding:0 1.6px">/</span>2021</div>
<div class="t" style="top:1194.59px;font-size:10px;color:#16325c;left:1039.5px;">GBP 320.00</div>
<div class="t" style="top:1194.59px;font-size:10px;color:#16325c;left:1153px;">GBP -230.40</div>
<div style="position:absolute;left:16px;top:1210px;width:1260px;height:1px;background:#dddbda;"></div>
<div class="t" style="top:1215.59px;font-size:10px;color:#16325c;letter-spacing:0.3px;left:82.6px;">29<span style="padding:0 1.6px">/</span>11<span style="padding:0 1.6px">/</span>2021</div>
<div class="t" style="top:1215.59px;font-size:10px;color:#16325c;left:170.8px;">BT-72559</div>
<div class="t" style="top:1215.59px;font-size:10px;color:#16325c;left:297px;">ADGrs</div>
<div class="t" style="top:1215.59px;font-size:10px;color:#16325c;left:397px;">-4 wk</div>
<div class="t" style="top:1215.59px;font-size:10px;color:#16325c;left:448px;">20.00% Agent Commission applied to HOMESTAY</div>
<div class="t" style="top:1215.59px;font-size:10px;color:#16325c;letter-spacing:0.3px;left:875.5px;">28<span style="padding:0 1.6px">/</span>11<span style="padding:0 1.6px">/</span>2021 - 26<span style="padding:0 1.6px">/</span>12<span style="padding:0 1.6px">/</span>2021</div>
<div class="t" style="top:1215.59px;font-size:10px;color:#16325c;left:1039.5px;">GBP 150.00</div>
<div class="t" style="top:1215.59px;font-size:10px;color:#16325c;left:1153px;">GBP -120.00</div>
<div class="t" style="top:1236.50px;font-size:10.1px;color:#16325c;font-weight:700;-webkit-text-stroke:0;left:16.5px;">Total Invoiced: £-230.40 Total Not Invoiced: £-120.00</div>
<div class="t" style="top:1236.59px;font-size:10px;color:#16325c;font-weight:700;-webkit-text-stroke:0;right:15.5px;">Agent Creditor Balance: £-350.40</div>
<div class="t" style="top:786.20px;font-size:14px;color:#ed6052;left:560.8px;font-family:"Liberation Sans",sans-serif;">Single consolidated CRE line (of reversals)</div>
<div class="t" style="top:1075.20px;font-size:14px;color:#ed6052;left:710.8px;">New transactions for the new INV</div>
<svg style="position:absolute;left:0;top:0" width="1291" height="1257" viewBox="0 0 1291 1257">
<defs><filter id="sh" x="-20%" y="-20%" width="140%" height="140%"><feDropShadow dx="2.5" dy="2.8" stdDeviation="1.2" flood-color="#2a2a2a" flood-opacity="0.8"/></filter></defs>
<g filter="url(#sh)" fill="#ed6052"><path d="M542.65 798.81 L393.56 854.80 L390.73 847.43 L374.60 866.80 L399.55 870.39 L396.71 863.02 L544.95 804.79 A3.2 3.2 0 0 0 542.65 798.81 Z"/><path d="M799.90 1057.73 L747.98 1012.99 L753.54 1006.43 L728.80 1001.60 L737.64 1025.20 L743.20 1018.64 L795.90 1062.47 A3.1 3.1 0 0 0 799.90 1057.73 Z"/></g></svg></body></html>
